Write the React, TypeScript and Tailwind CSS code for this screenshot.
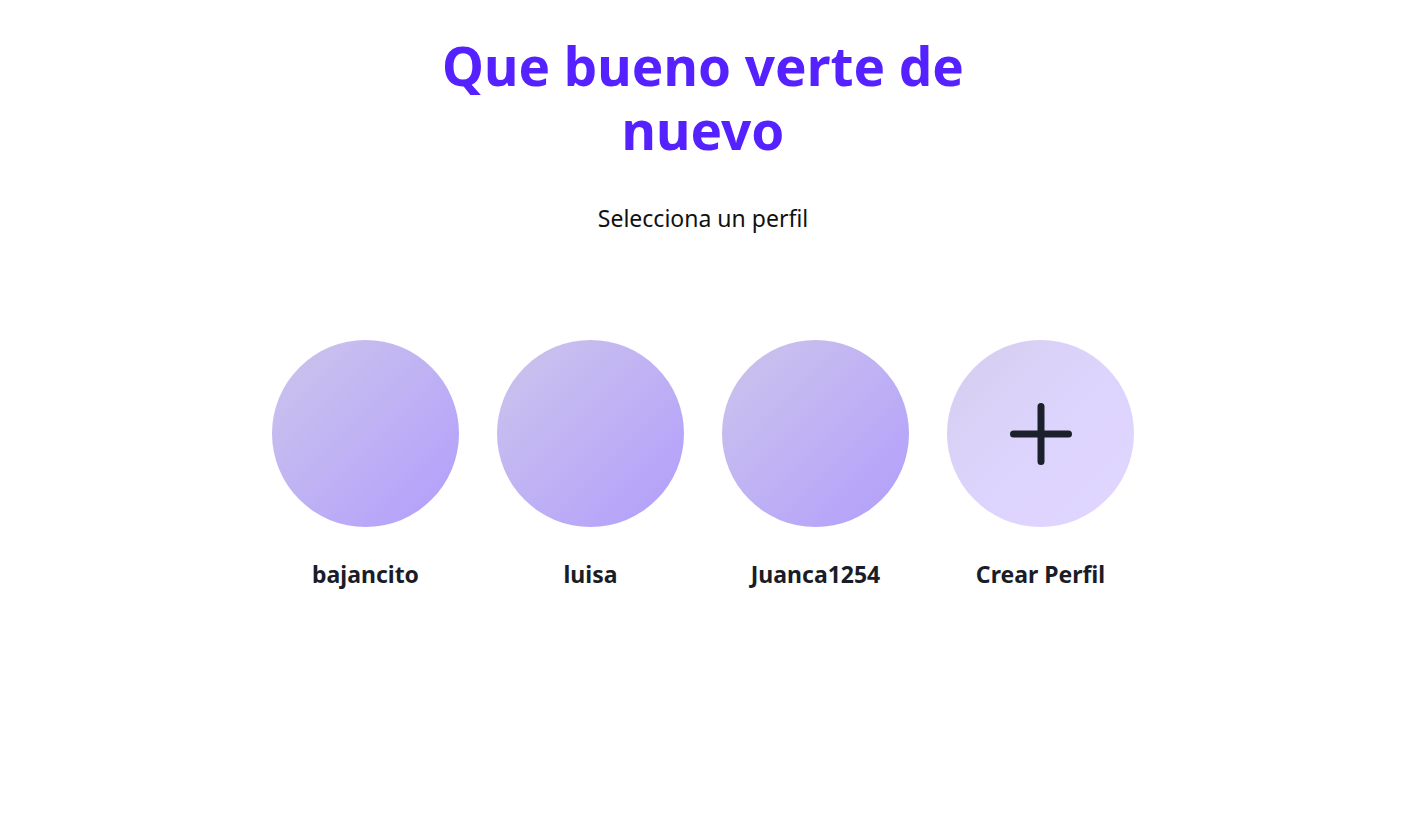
import React from "react";

const profiles = ["bajancito", "luisa", "Juanca1254"];

export default function App() {
  return (
    <div
      className="min-h-screen w-full bg-white flex flex-col items-center pr-[12px]"
      style={{ fontFamily: '"Noto Sans", "Open Sans", sans-serif' }}
    >
      <h1 className="mt-[34px] w-[600px] text-center text-[53px] leading-[64px] font-bold text-[#5522ff]">
        Que bueno verte de nuevo
      </h1>
      <p className="mt-[41px] text-[23px] leading-[30px] text-[#111111]">Selecciona un perfil</p>
      <div className="mt-[107px] flex gap-[38px]">
        {profiles.map((p) => (
          <div key={p} className="flex flex-col items-center">
            <div className="w-[187px] h-[187px] rounded-full bg-gradient-to-br from-[#cdc5eb] to-[#b29dfc]" />
            <span className="mt-[32px] text-[23px] leading-[30px] font-bold text-[#1a1d27]">{p}</span>
          </div>
        ))}
        <div className="flex flex-col items-center">
          <div className="w-[187px] h-[187px] rounded-full bg-gradient-to-br from-[#d4cdee] via-[#ddd4fd] to-[#e0d6ff] flex items-center justify-center">
            <svg width="70" height="70" viewBox="0 0 70 70" fill="none">
              <path d="M35 7.5V62.5M7.5 35H62.5" stroke="#1c202c" strokeWidth="7" strokeLinecap="round" />
            </svg>
          </div>
          <span className="mt-[32px] text-[23px] leading-[30px] font-bold text-[#1a1d27]">Crear Perfil</span>
        </div>
      </div>
    </div>
  );
}
